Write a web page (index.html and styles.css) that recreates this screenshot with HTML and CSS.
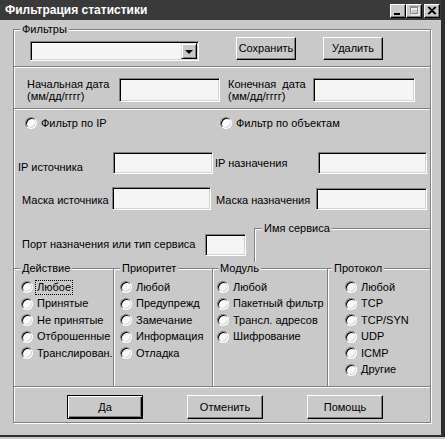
FILE: index.html
```html
<!DOCTYPE html>
<html lang="ru">
<head>
<meta charset="utf-8">
<title>Фильтрация статистики</title>
<link rel="stylesheet" href="styles.css">
</head>
<body>
<div class="window">
  <div class="titlebar">
    <span class="title">Фильтрация статистики</span>
    <div class="tb-buttons">
      <span class="tb-btn"><svg width="14" height="12" viewBox="0 0 14 12"><rect x="3" y="8" width="6" height="2" fill="#000"/></svg></span>
      <span class="tb-btn"><svg width="14" height="12" viewBox="0 0 14 12"><path d="M4 3h8v7h-8z M4 4h8" fill="none" stroke="#fff" stroke-width="1"/><path d="M3 1.5h8 M3 2.5h8 M3.5 1v8 M10.5 1v8 M3 8.5h8" fill="none" stroke="#8a8a8a" stroke-width="1"/></svg></span>
      <span class="tb-btn tb-close"><svg width="14" height="12" viewBox="0 0 14 12"><path d="M3 2l7 7 M4 2l7 7 M10 2l-7 7 M11 2l-7 7" stroke="#000" stroke-width="1.1" fill="none"/></svg></span>
    </div>
  </div>

  <div class="frame">
    <div class="sec sec-a">
      <div class="legend lg-a">Фильтры</div>
      <div class="row-a">
        <div class="combo"><span class="combo-btn"><span class="tri"></span></span></div>
        <button class="btn btn-save">Сохранить</button>
        <button class="btn btn-del">Удалить</button>
      </div>
    </div>

    <div class="sec sec-b">
      <div class="date-label dl-1">Начальная дата<br>(мм/дд/гггг)</div>
      <div class="field df-1"></div>
      <div class="date-label dl-2">Конечная&nbsp; дата<br>(мм/дд/гггг)</div>
      <div class="field df-2"></div>
    </div>

    <div class="sec sec-c">
      <div class="radio-row">
        <div class="ritem ri-1"><span class="radio"></span><span>Фильтр по IP</span></div>
        <div class="ritem"><span class="radio"></span><span>Фильтр по объектам</span></div>
      </div>
      <div class="ip-row">
        <div class="lbl l-ip1">IP источника</div>
        <div class="field f-ip1"></div>
        <div class="lbl l-ip2">IP назначения</div>
        <div class="field f-ip2"></div>
      </div>
      <div class="mask-row">
        <div class="lbl l-m1">Маска источника</div>
        <div class="field f-m1"></div>
        <div class="lbl l-m2">Маска назначения</div>
        <div class="field f-m2"></div>
      </div>
      <div class="bottom-row">
        <div class="port">
          <div class="lbl l-port">Порт назначения или тип сервиса</div>
          <div class="field f-port"></div>
        </div>
        <div class="svc">
          <div class="legend lg-svc">Имя сервиса</div>
        </div>
      </div>
    </div>

    <div class="sec sec-d">
      <div class="grp g1">
        <div class="legend lg-g1">Действие</div>
        <ul class="rlist">
          <li><span class="radio"></span><span class="focus">Любое</span></li>
          <li><span class="radio"></span><span>Принятые</span></li>
          <li><span class="radio"></span><span>Не принятые</span></li>
          <li><span class="radio"></span><span>Отброшенные</span></li>
          <li><span class="radio"></span><span>Транслирован.</span></li>
        </ul>
      </div>
      <div class="grp g2">
        <div class="legend lg-g2">Приоритет</div>
        <ul class="rlist">
          <li><span class="radio"></span><span>Любой</span></li>
          <li><span class="radio"></span><span>Предупрежд</span></li>
          <li><span class="radio"></span><span>Замечание</span></li>
          <li><span class="radio"></span><span>Информация</span></li>
          <li><span class="radio"></span><span>Отладка</span></li>
        </ul>
      </div>
      <div class="grp g3">
        <div class="legend lg-g3">Модуль</div>
        <ul class="rlist">
          <li><span class="radio"></span><span>Любой</span></li>
          <li><span class="radio"></span><span>Пакетный фильтр</span></li>
          <li><span class="radio"></span><span>Трансл. адресов</span></li>
          <li><span class="radio"></span><span>Шифрование</span></li>
        </ul>
      </div>
      <div class="grp g4">
        <div class="legend lg-g4">Протокол</div>
        <ul class="rlist">
          <li><span class="radio"></span><span>Любой</span></li>
          <li><span class="radio"></span><span>TCP</span></li>
          <li><span class="radio"></span><span>TCP/SYN</span></li>
          <li><span class="radio"></span><span>UDP</span></li>
          <li><span class="radio"></span><span>ICMP</span></li>
          <li><span class="radio"></span><span>Другие</span></li>
        </ul>
      </div>
    </div>

    <div class="sec sec-e">
      <button class="btn btn-big btn-default">Да</button>
      <button class="btn btn-big">Отменить</button>
      <button class="btn btn-big">Помощь</button>
    </div>
  </div>
</div>
</body>
</html>
```

FILE: styles.css
```css
html, body {
  margin: 0;
  padding: 0;
  background: #c9c9c9;
}
body {
  font-family: "Liberation Sans", Arial, sans-serif;
  font-size: 11px;
  color: #000;
}
.window {
  width: 445px;
  height: 437px;
  box-sizing: border-box;
  background: #c9c9c9;
  border-right: 4px solid #2e2e2e;
  border-bottom: 2px solid #2e2e2e;
}

/* title bar */
.titlebar {
  height: 20px;
  background: #3a3a3a;
  display: flex;
  align-items: flex-start;
}
.title {
  flex: 1;
  line-height: 20px;
  padding-left: 5px;
  font-weight: bold;
  font-size: 12px;
  color: #fff;
  white-space: nowrap;
}
.tb-buttons {
  display: flex;
  padding-top: 4px;
  padding-right: 1px;
}
.tb-btn {
  width: 16px;
  height: 14px;
  box-sizing: border-box;
  background: #c9c9c9;
  border: 1px solid;
  border-color: #fff #000 #000 #fff;
  box-shadow: inset -1px -1px 0 #808080;
  display: flex;
}
.tb-close { margin-left: 2px; }

/* outer etched frame */
.frame {
  margin: 9px 0 0 13px;
  width: 418px;
  height: 394px;
  box-sizing: border-box;
  border: 1px solid #808080;
  box-shadow: inset 1px 1px 0 #fff, 1px 1px 0 #fff;
  display: flex;
  flex-direction: column;
}
.sec {
  box-sizing: border-box;
  flex: none;
}
.sec-b, .sec-c, .sec-e {
  border-top: 1px solid #808080;
  box-shadow: inset 0 1px 0 #fff;
}
.sec-d {
  border-top: 1px solid #808080;
}

.legend {
  align-self: flex-start;
  background: #c9c9c9;
  padding: 0 2px;
  line-height: 13px;
  margin-top: -7px;
  white-space: nowrap;
}

/* section A */
.sec-a {
  height: 36px;
  display: flex;
  flex-direction: column;
}
.lg-a { margin-left: 6px; }
.row-a {
  display: flex;
  align-items: flex-start;
  margin-top: 1px;
  padding-left: 16px;
}
.combo {
  width: 169px;
  height: 20px;
  margin-top: 4px;
  box-sizing: border-box;
  padding: 1px;
  background: #f5f5f5;
  border: 1px solid;
  border-color: #808080 #fff #fff #808080;
  box-shadow: inset 1px 1px 0 #000, inset -1px -1px 0 #d4d4d4;
  display: flex;
  justify-content: flex-end;
}
.combo-btn {
  width: 16px;
  height: 16px;
  box-sizing: border-box;
  background: #c9c9c9;
  border: 1px solid;
  border-color: #dfdfdf #000 #000 #dfdfdf;
  box-shadow: inset 1px 1px 0 #fff, inset -1px -1px 0 #808080;
  display: flex;
  align-items: center;
  justify-content: center;
}
.tri {
  width: 0;
  height: 0;
  border-left: 4px solid transparent;
  border-right: 4px solid transparent;
  border-top: 4px solid #000;
  margin-top: 1px;
}

.btn {
  font-family: "Liberation Sans", Arial, sans-serif;
  font-size: 11px;
  color: #000;
  background: #c9c9c9;
  box-sizing: border-box;
  border: 1px solid;
  border-color: #fff #000 #000 #fff;
  box-shadow: inset -1px -1px 0 #808080;
  padding: 0;
  margin: 0;
  line-height: 13px;
  white-space: nowrap;
}
.btn-save { width: 60px; height: 23px; margin-left: 37px; }
.btn-del { width: 60px; height: 23px; margin-left: 27px; }

/* fields */
.field {
  box-sizing: border-box;
  background: #f5f5f5;
  border: 1px solid;
  border-color: #808080 #fff #fff #808080;
  box-shadow: inset 1px 1px 0 #000, inset -1px -1px 0 #d4d4d4;
  flex: none;
}

/* section B */
.sec-b {
  height: 42px;
  display: flex;
  align-items: flex-start;
  padding-top: 11px;
}
.date-label {
  line-height: 12px;
  box-sizing: border-box;
  white-space: nowrap;
}
.dl-1 { width: 105px; padding-left: 13px; }
.df-1 { width: 101px; height: 24px; }
.dl-2 { width: 93px; padding-left: 8px; }
.df-2 { width: 102px; height: 24px; }

/* section C */
.sec-c {
  height: 160px;
  display: flex;
  flex-direction: column;
}
.radio-row {
  display: flex;
  align-items: center;
  height: 14px;
  margin-top: 7px;
  padding-left: 11px;
}
.ritem {
  display: flex;
  align-items: center;
  line-height: 13px;
}
.ri-1 { width: 195px; }

.radio {
  width: 12px;
  height: 12px;
  box-sizing: border-box;
  border-radius: 50%;
  background: #fbfbfb;
  border: 1px solid;
  border-color: #808080 #fff #fff #808080;
  box-shadow: inset 1px 1px 0 #000, inset -1px -1px 0 #d4d4d4;
  margin-right: 4px;
  flex: none;
}

.lbl {
  box-sizing: border-box;
  line-height: 13px;
  white-space: nowrap;
  flex: none;
}
.ip-row {
  display: flex;
  align-items: flex-start;
  height: 22px;
  margin-top: 22px;
}
.l-ip1 { width: 99px; padding-left: 4px; padding-top: 9px; }
.f-ip1 { width: 100px; height: 22px; }
.l-ip2 { width: 103px; margin-left: 2px; padding-top: 5px; }
.f-ip2 { width: 109px; height: 22px; }

.mask-row {
  display: flex;
  align-items: flex-start;
  height: 23px;
  margin-top: 13px;
}
.l-m1 { width: 98px; padding-left: 8px; padding-top: 7px; }
.f-m1 { width: 99px; height: 23px; }
.l-m2 { width: 100px; margin-left: 5px; padding-top: 7px; }
.f-m2 { width: 111px; height: 22px; margin-top: 1px; }

.bottom-row {
  display: flex;
  flex: 1;
  margin-top: 18px;
}
.port {
  display: flex;
  align-items: flex-start;
  margin-top: 6px;
}
.l-port { width: 191px; padding-left: 8px; padding-top: 4px; }
.f-port { width: 41px; height: 22px; }
.svc {
  flex: 1;
  margin-left: 8px;
  display: flex;
  flex-direction: column;
  border-top: 1px solid #808080;
  border-left: 1px solid #808080;
  box-shadow: inset 1px 1px 0 #fff;
}
.lg-svc { margin-left: 7px; }

/* section D */
.sec-d {
  height: 118px;
  display: flex;
}
.grp {
  box-sizing: border-box;
  display: flex;
  flex-direction: column;
  box-shadow: inset 1px 1px 0 #fff;
  flex: none;
}
.g1 { width: 99px; }
.g2 { width: 99px; border-left: 1px solid #808080; }
.g3 { width: 115px; border-left: 1px solid #808080; }
.g4 { width: 103px; border-left: 1px solid #808080; }
.lg-g1 { margin-left: 6px; }
.lg-g2 { margin-left: 6px; }
.lg-g3 { margin-left: 5px; }
.lg-g4 { margin-left: 4px; }

.rlist {
  list-style: none;
  margin: 4px 0 0 0;
  padding: 0;
}
.rlist li {
  display: flex;
  align-items: center;
  height: 16.5px;
  line-height: 13px;
  white-space: nowrap;
}
.g1 .rlist { padding-left: 7px; }
.g2 .rlist { padding-left: 6px; }
.g3 .rlist { padding-left: 4px; }
.g4 .rlist { padding-left: 17px; }

.focus {
  border: 1px dotted #000;
  padding: 0 1px;
  margin: 0 -2px 0 -2px;
}

/* section E */
.sec-e {
  height: 36px;
  display: flex;
  align-items: flex-start;
  gap: 44px;
  padding-top: 8px;
  padding-left: 53px;
}
.btn-big { width: 76px; height: 24px; }
.btn-default {
  border: 1px solid #000;
  box-shadow: inset 1px 1px 0 #fff, inset -1px -1px 0 #000, inset -2px -2px 0 #808080;
}
```
